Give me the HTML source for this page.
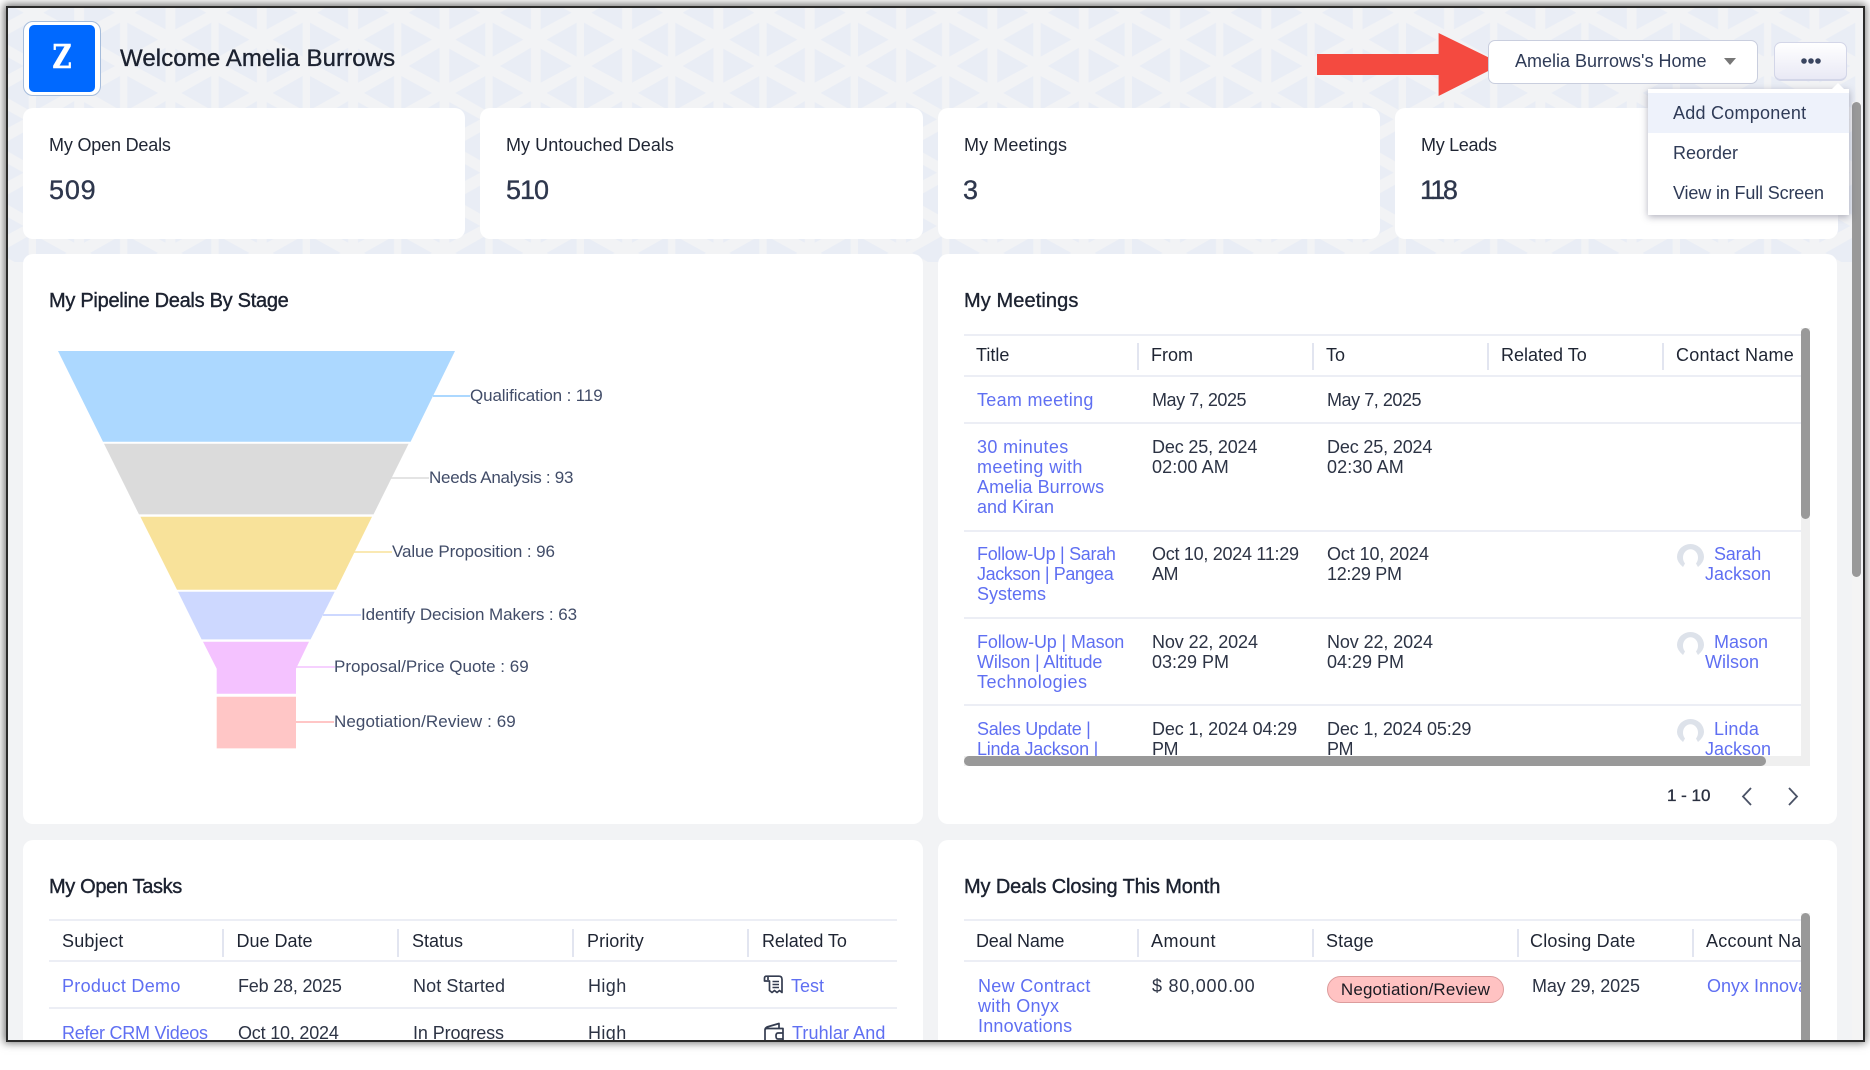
<!DOCTYPE html>
<html><head><meta charset="utf-8"><style>
html,body{margin:0;padding:0;width:1870px;height:1049px;overflow:hidden;background:#fff;font-family:"Liberation Sans",sans-serif}
.fr{position:absolute;left:7px;top:7px;width:1856px;height:1033px;box-shadow:0 0 8px 3px rgba(0,0,0,.55)}
.layer{position:absolute;left:0;top:0;width:1870px;height:1049px}
.main{clip-path:inset(7px 7px 9px 7px);background:#f2f3f5}
.c{position:absolute;background:#fff;border-radius:10px}
.t{position:absolute;white-space:nowrap;line-height:20px;font-size:18px;color:#2c3344}
.h{color:#1f2533}
.a{color:#5f6ff2}
.b{-webkit-text-stroke:.35px currentColor}
.ti{font-size:20px;color:#1c2230;-webkit-text-stroke:.4px #1c2230}
.l{position:absolute;background:#eceef5;height:2px}
.s{position:absolute;background:#e2e5f0;width:2px}
.f{font-size:17px;color:#414c68}
.sb{position:absolute;background:#999;border-radius:5px}
.tr{position:absolute;background:#efefef}
</style></head><body>
<div class="fr"></div>
<div class="layer main">
<svg class="layer" style="height:262px" width="1870" height="262"><defs><pattern id="p" patternUnits="userSpaceOnUse" x="492.67" y="22.67" width="91.33" height="53.33"><g fill="#e9edf5"><path d="M0 0V34L30.7 17Z"/><path d="M84 0V34L54 17Z"/><path d="M48 26V60L79 43.3Z"/><path d="M38.2 25V60L7.3 43.3Z"/><path d="M48 -27.33V6.67L79 -10Z"/><path d="M38.2 -28.33V6.67L7.3 -10Z"/></g></pattern></defs><rect width="1870" height="262" fill="url(#p)"/></svg>

<!-- header -->
<div style="position:absolute;left:23px;top:21px;width:76px;height:73px;border:1px solid #a5bcdb;border-radius:10px;background:#fff"></div>
<div style="position:absolute;left:29px;top:25px;width:66px;height:67px;background:#0069ff;border-radius:5px"></div>
<div class="t" style="left:40px;top:45px;line-height:24px;font-family:'DejaVu Serif',serif;font-size:33px;font-weight:bold;color:#fff;width:44px;text-align:center;transform:scaleX(.8);-webkit-text-stroke:.4px #fff">Z</div>
<div class="t b" style="left:120px;top:47px;line-height:24px;font-size:24px;color:#1c2230;letter-spacing:.1px">Welcome Amelia Burrows</div>

<svg class="layer" width="1870" height="100" style="height:100px"><path d="M1317 54H1438.6V33L1502 64 1438.6 96V75H1317Z" fill="#f44a40"/></svg>
<div style="position:absolute;left:1488px;top:40px;width:268px;height:42px;background:#fff;border:1px solid #c9cede;border-radius:7px"></div>
<div class="t" style="left:1515px;top:51px;color:#2f3b57">Amelia Burrows's Home</div>
<svg class="layer" width="1870" height="100" style="height:100px"><path d="M1724 58H1736L1730 65Z" fill="#777"/></svg>
<div style="position:absolute;left:1774px;top:42px;width:71px;height:36px;background:linear-gradient(#fff,#e9e9f5);border:1px solid #d3d6e8;border-bottom-width:2px;border-radius:7px"></div>
<svg class="layer" width="1870" height="100" style="height:100px"><g fill="#3a4560"><circle cx="1804" cy="61" r="2.8"/><circle cx="1811" cy="61" r="2.8"/><circle cx="1818" cy="61" r="2.8"/></g></svg>

<!-- stat cards -->
<div class="c" style="left:23px;top:108px;width:442px;height:131px"></div>
<div class="c" style="left:480px;top:108px;width:443px;height:131px"></div>
<div class="c" style="left:938px;top:108px;width:442px;height:131px"></div>
<div class="c" style="left:1395px;top:108px;width:443px;height:131px"></div>
<div class="t h" style="left:49px;top:135px;letter-spacing:-.18px">My Open Deals</div>
<div class="t h" style="left:506px;top:135px;letter-spacing:.05px">My Untouched Deals</div>
<div class="t h" style="left:964px;top:135px;letter-spacing:.1px">My Meetings</div>
<div class="t h" style="left:1421px;top:135px;letter-spacing:-.3px">My Leads</div>
<div class="t b" style="left:49px;top:180px;font-size:27px;color:#2e374d;letter-spacing:.8px">509</div>
<div class="t b" style="left:506px;top:180px;font-size:27px;color:#2e374d;letter-spacing:-1px">510</div>
<div class="t b" style="left:963px;top:180px;font-size:27px;color:#2e374d">3</div>
<div class="t b" style="left:1420px;top:180px;font-size:27px;color:#2e374d;letter-spacing:-2.6px">118</div>

<!-- panels -->
<div class="c" style="left:23px;top:254px;width:900px;height:570px"></div>
<div class="c" style="left:938px;top:254px;width:899px;height:570px"></div>
<div class="c" style="left:23px;top:840px;width:900px;height:230px"></div>
<div class="c" style="left:938px;top:840px;width:899px;height:230px"></div>

<!-- funnel -->
<div class="t ti" style="left:49px;top:291px;letter-spacing:-.28px">My Pipeline Deals By Stage</div>
<svg class="layer" width="1870" height="800" style="height:800px">
<g transform="translate(0 .7)">
<path d="M58 350.3H455L410.6 441H103Z" fill="#acd8ff"/>
<path d="M104 443H408.6L373.5 513.7H139Z" fill="#dbdbdb"/>
<path d="M140.4 516H372L336 589H177Z" fill="#f8e29a"/>
<path d="M178 591H334.7L310.6 638.7H201.6Z" fill="#cdd8ff"/>
<path d="M203 641H309L296 668V693H216.7V668Z" fill="#f4c2ff"/>
<path d="M216.7 696H296V747.7H216.7Z" fill="#ffc6c6"/>
</g>
<path d="M433 396H470" stroke="#acd8ff" stroke-width="2"/>
<path d="M391 478H429" stroke="#dbdbdb" stroke-width="1.5"/>
<path d="M354 552H392" stroke="#f8e29a" stroke-width="1.5"/>
<path d="M323 615H361" stroke="#cdd8ff" stroke-width="2"/>
<path d="M296 667H335" stroke="#f4c2ff" stroke-width="1.5"/>
<path d="M296 722H334" stroke="#ffc6c6" stroke-width="2"/>
</svg>
<div class="t f" style="left:470px;top:386px;letter-spacing:-.12px">Qualification : 119</div>
<div class="t f" style="left:429px;top:468px;letter-spacing:-.27px">Needs Analysis : 93</div>
<div class="t f" style="left:392px;top:542px;letter-spacing:-.1px">Value Proposition : 96</div>
<div class="t f" style="left:361px;top:605px;letter-spacing:-.08px">Identify Decision Makers : 63</div>
<div class="t f" style="left:334px;top:657px">Proposal/Price Quote : 69</div>
<div class="t f" style="left:334px;top:712px;letter-spacing:.1px">Negotiation/Review : 69</div>

<!-- meetings -->
<div class="t ti" style="left:964px;top:291px;letter-spacing:.1px;-webkit-text-stroke:.35px #1c2230">My Meetings</div>
<div class="tr" style="left:1801px;top:328px;width:9px;height:438px"></div>
<div class="tr" style="left:964px;top:756px;width:846px;height:10px"></div>
<div class="layer" style="clip-path:inset(334px 69px 293px 964px)">
<div class="l" style="left:964px;top:334px;width:837px"></div>
<div class="l" style="left:964px;top:375px;width:837px"></div>
<div class="l" style="left:964px;top:422px;width:837px"></div>
<div class="l" style="left:964px;top:530px;width:837px"></div>
<div class="l" style="left:964px;top:617px;width:837px"></div>
<div class="l" style="left:964px;top:704px;width:837px"></div>
<div class="s" style="left:1137px;top:343px;height:27px"></div>
<div class="s" style="left:1312px;top:343px;height:27px"></div>
<div class="s" style="left:1487px;top:343px;height:27px"></div>
<div class="s" style="left:1662px;top:343px;height:27px"></div>
<div class="t h" style="left:976px;top:345px">Title</div>
<div class="t h" style="left:1151px;top:345px">From</div>
<div class="t h" style="left:1326px;top:345px">To</div>
<div class="t h" style="left:1501px;top:345px">Related To</div>
<div class="t h" style="left:1676px;top:345px;letter-spacing:.25px">Contact Name</div>

<div class="t a" style="left:977px;top:390px;letter-spacing:.3px">Team meeting</div>
<div class="t" style="left:1152px;top:390px;letter-spacing:-.45px">May 7, 2025</div>
<div class="t" style="left:1327px;top:390px;letter-spacing:-.45px">May 7, 2025</div>

<div class="t a" style="left:977px;top:437px;letter-spacing:.35px">30 minutes</div>
<div class="t a" style="left:977px;top:457px;letter-spacing:.4px">meeting with</div>
<div class="t a" style="left:977px;top:477px;letter-spacing:.08px">Amelia Burrows</div>
<div class="t a" style="left:977px;top:497px">and Kiran</div>
<div class="t" style="left:1152px;top:437px;letter-spacing:-.15px">Dec 25, 2024</div>
<div class="t" style="left:1152px;top:457px;letter-spacing:.1px">02:00 AM</div>
<div class="t" style="left:1327px;top:437px;letter-spacing:-.15px">Dec 25, 2024</div>
<div class="t" style="left:1327px;top:457px;letter-spacing:.1px">02:30 AM</div>

<div class="t a" style="left:977px;top:544px;letter-spacing:-.3px">Follow-Up | Sarah</div>
<div class="t a" style="left:977px;top:564px;letter-spacing:-.4px">Jackson | Pangea</div>
<div class="t a" style="left:977px;top:584px">Systems</div>
<div class="t" style="left:1152px;top:544px;letter-spacing:-.28px">Oct 10, 2024 11:29</div>
<div class="t" style="left:1152px;top:564px;letter-spacing:-.5px">AM</div>
<div class="t" style="left:1327px;top:544px;letter-spacing:-.1px">Oct 10, 2024</div>
<div class="t" style="left:1327px;top:564px;letter-spacing:-.3px">12:29 PM</div>
<div class="t a" style="left:1714px;top:544px;letter-spacing:-.2px">Sarah</div>
<div class="t a" style="left:1705px;top:564px">Jackson</div>

<div class="t a" style="left:977px;top:632px;letter-spacing:-.15px">Follow-Up | Mason</div>
<div class="t a" style="left:977px;top:652px;letter-spacing:-.15px">Wilson | Altitude</div>
<div class="t a" style="left:977px;top:672px;letter-spacing:.45px">Technologies</div>
<div class="t" style="left:1152px;top:632px;letter-spacing:-.1px">Nov 22, 2024</div>
<div class="t" style="left:1152px;top:652px">03:29 PM</div>
<div class="t" style="left:1327px;top:632px;letter-spacing:-.1px">Nov 22, 2024</div>
<div class="t" style="left:1327px;top:652px">04:29 PM</div>
<div class="t a" style="left:1714px;top:632px">Mason</div>
<div class="t a" style="left:1705px;top:652px">Wilson</div>

<div class="t a" style="left:977px;top:719px;letter-spacing:-.3px">Sales Update |</div>
<div class="t a" style="left:977px;top:739px;letter-spacing:-.25px">Linda Jackson |</div>
<div class="t" style="left:1152px;top:719px;letter-spacing:-.12px">Dec 1, 2024 04:29</div>
<div class="t" style="left:1152px;top:739px;letter-spacing:-.5px">PM</div>
<div class="t" style="left:1327px;top:719px;letter-spacing:-.17px">Dec 1, 2024 05:29</div>
<div class="t" style="left:1327px;top:739px;letter-spacing:-.5px">PM</div>
<div class="t a" style="left:1714px;top:719px;letter-spacing:.2px">Linda</div>
<div class="t a" style="left:1705px;top:739px">Jackson</div>

<svg class="layer" width="1870" height="800" style="height:800px" fill="#dde2ea">
<defs><path id="av" d="M6 23Q0 18 0 13A13.5 13 0 0 1 27 13Q27 18 21 23L19 19.5A7.5 8.5 0 1 0 8 19.5Z"/></defs>
<use href="#av" x="1677" y="544"/>
<use href="#av" x="1677" y="632"/>
<use href="#av" x="1677" y="719"/>
</svg>
</div>
<div class="sb" style="left:1801px;top:328px;width:9px;height:191px"></div>
<div class="sb" style="left:964px;top:756px;width:802px;height:10px"></div>
<div class="t b" style="left:1667px;top:786px;font-size:17px;color:#2a3040">1 - 10</div>
<svg class="layer" width="1870" height="820" style="height:820px" fill="none" stroke="#4a5266" stroke-width="1.8"><path d="M1751 788L1743 796.5 1751 805"/><path d="M1789 788L1797 796.5 1789 805"/></svg>

<!-- tasks -->
<div class="t ti" style="left:49px;top:877px;letter-spacing:-.35px">My Open Tasks</div>
<div class="l" style="left:49px;top:919px;width:848px"></div>
<div class="l" style="left:49px;top:960px;width:848px"></div>
<div class="l" style="left:49px;top:1007px;width:848px"></div>
<div class="s" style="left:222px;top:929px;height:28px"></div>
<div class="s" style="left:397px;top:929px;height:28px"></div>
<div class="s" style="left:572px;top:929px;height:28px"></div>
<div class="s" style="left:747px;top:929px;height:28px"></div>
<div class="t h" style="left:62px;top:931px;letter-spacing:.2px">Subject</div>
<div class="t h" style="left:236.5px;top:931px">Due Date</div>
<div class="t h" style="left:412px;top:931px">Status</div>
<div class="t h" style="left:587px;top:931px;letter-spacing:.1px">Priority</div>
<div class="t h" style="left:762px;top:931px;letter-spacing:-.1px">Related To</div>
<div class="t a" style="left:62px;top:976px;letter-spacing:.3px">Product Demo</div>
<div class="t" style="left:238px;top:976px;letter-spacing:-.2px">Feb 28, 2025</div>
<div class="t" style="left:413px;top:976px;letter-spacing:.1px">Not Started</div>
<div class="t" style="left:588px;top:976px;letter-spacing:.4px">High</div>
<div class="t a" style="left:791px;top:976px">Test</div>
<div class="t a" style="left:62px;top:1023px;letter-spacing:-.25px">Refer CRM Videos</div>
<div class="t" style="left:238px;top:1023px;letter-spacing:-.2px">Oct 10, 2024</div>
<div class="t" style="left:413px;top:1023px;letter-spacing:-.1px">In Progress</div>
<div class="t" style="left:588px;top:1023px;letter-spacing:.4px">High</div>
<div class="t a" style="left:792px;top:1023px;letter-spacing:.1px">Truhlar And</div>
<svg class="layer" width="1870" height="1049" fill="none" stroke="#343c50" stroke-width="1.7" stroke-linejoin="round">
<path d="M768 980V976.2H779Q782 976.2 782 979.5V992.5L779.5 990.5 777 992.5 774.5 990.5 772 992.5 769.5 990.5V981H764.5V978.2Q764.5 976.2 766.5 976.2H768"/>
<path d="M772.5 981.5H779M772.5 984.5H779M772.5 987.5H779" stroke-width="1.5"/>
<path d="M765 1042V1030Q765 1028 767 1027L779 1023.5V1028M765 1030Q765 1028.5 767 1028.5H783V1042"/>
<path d="M783 1033H778Q776 1033 776 1036T778 1039H783"/>
</svg>

<!-- deals -->
<div class="t ti" style="left:964px;top:877px;letter-spacing:-.13px">My Deals Closing This Month</div>
<div class="layer" style="clip-path:inset(919px 69px 0 964px)">
<div class="l" style="left:964px;top:919px;width:837px"></div>
<div class="l" style="left:964px;top:960px;width:837px"></div>
<div class="s" style="left:1137px;top:929px;height:28px"></div>
<div class="s" style="left:1312px;top:929px;height:28px"></div>
<div class="s" style="left:1517px;top:929px;height:28px"></div>
<div class="s" style="left:1692px;top:929px;height:28px"></div>
<div class="t h" style="left:976px;top:931px;letter-spacing:-.2px">Deal Name</div>
<div class="t h" style="left:1151px;top:931px;letter-spacing:.5px">Amount</div>
<div class="t h" style="left:1326px;top:931px;letter-spacing:.15px">Stage</div>
<div class="t h" style="left:1530px;top:931px;letter-spacing:.2px">Closing Date</div>
<div class="t h" style="left:1706px;top:931px;letter-spacing:.25px">Account Name</div>
<div class="t a" style="left:978px;top:976px;letter-spacing:.3px">New Contract</div>
<div class="t a" style="left:978px;top:996px;letter-spacing:.25px">with Onyx</div>
<div class="t a" style="left:978px;top:1016px;letter-spacing:.2px">Innovations</div>
<div class="t" style="left:1152px;top:976px;letter-spacing:.75px">$ 80,000.00</div>
<div style="position:absolute;left:1327px;top:976px;width:175px;height:25px;background:#ffc2c2;border:1px solid #dc9c9c;border-radius:14px"></div>
<div class="t" style="left:1327px;top:980px;width:177px;text-align:center;font-size:17px;color:#1a1a22;letter-spacing:.15px">Negotiation/Review</div>
<div class="t" style="left:1532px;top:976px;letter-spacing:-.1px">May 29, 2025</div>
<div class="t a" style="left:1707px;top:976px">Onyx Innovations</div>
</div>
<div class="tr" style="left:1801px;top:913px;width:9px;height:127px"></div>
<div class="sb" style="left:1801px;top:913px;width:9px;height:140px"></div>

<!-- page scrollbar -->
<div style="position:absolute;left:1852px;top:102px;width:9px;height:938px;background:#f4f4f4"></div>
<div class="sb" style="left:1852px;top:102px;width:9px;height:475px"></div>

<!-- menu -->
<div style="position:absolute;left:1648px;top:89px;width:201px;height:126px;background:#fff;box-shadow:0 2px 7px rgba(60,60,90,.4)"></div>
<svg class="layer" width="1870" height="100" style="height:100px"><path d="M1831 90L1838 83 1845 90Z" fill="#fff"/></svg>
<div style="position:absolute;left:1648px;top:93px;width:201px;height:40px;background:#eef2fb"></div>
<div class="t" style="left:1673px;top:103px;color:#2f3b57;letter-spacing:.25px">Add Component</div>
<div class="t" style="left:1673px;top:143px;color:#2f3b57">Reorder</div>
<div class="t" style="left:1673px;top:183px;color:#2f3b57;letter-spacing:-.15px">View in Full Screen</div>
</div>
<div style="position:absolute;left:6px;top:6px;width:1855px;height:1032px;border:2px solid #2a2a2a;pointer-events:none"></div>
</body></html>
